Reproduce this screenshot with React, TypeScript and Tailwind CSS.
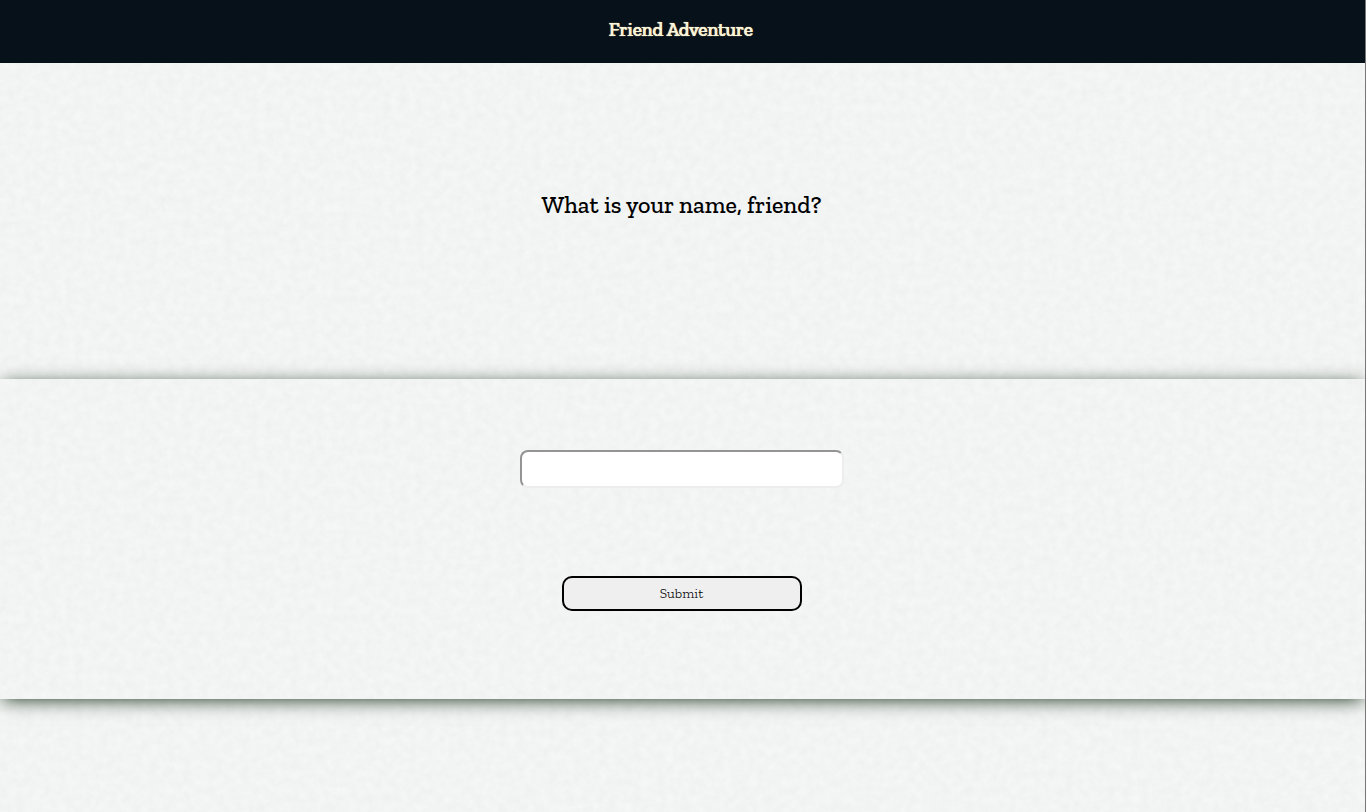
import { useState } from "react";

function PaperTexture({ id }: { id: string }) {
  return (
    <svg aria-hidden="true" className="pointer-events-none absolute inset-0 h-full w-full">
      <filter id={id} x="0" y="0" width="100%" height="100%" colorInterpolationFilters="sRGB">
        <feTurbulence type="fractalNoise" baseFrequency="0.12" numOctaves="3" seed="8" stitchTiles="stitch" />
        <feColorMatrix
          values="0.036 0 0 0 0.932
                  0.036 0 0 0 0.938
                  0.036 0 0 0 0.936
                  0 0 0 0 1"
        />
      </filter>
      <rect width="100%" height="100%" filter={`url(#${id})`} />
    </svg>
  );
}

export default function App() {
  const [name, setName] = useState("");

  return (
    <div className="flex min-h-screen flex-col overflow-hidden border-r border-[#777777] bg-[#f2f4f3] font-['Zilla_Slab','DejaVu_Serif',serif] text-black">
      <header className="flex h-[63px] items-center justify-center bg-[#061119] pr-1 pb-0.5">
        <h1 className="text-[19px] font-normal text-[#fbf6da] [text-shadow:1px_0_0_#fbf6da,0_0_1px_#fbf6da]">Friend Adventure</h1>
      </header>
      <main className="relative flex grow flex-col">
        <PaperTexture id="paper-page" />
        <section className="relative flex h-[316px] items-center justify-center pr-0.5 pb-8">
          <h2 className="text-2xl font-medium">
            <label htmlFor="friend-name">What is your name, friend?</label>
          </h2>
        </section>
        <section className="relative h-80 shadow-[0_3px_18px_-3px_#0f2810]">
          <PaperTexture id="paper-panel" />
          <form
            className="relative flex flex-col items-center pt-[71px] pr-0.5"
            onSubmit={(event) => event.preventDefault()}
          >
            <input
              id="friend-name"
              type="text"
              value={name}
              onChange={(event) => setName(event.target.value)}
              className="h-[38px] w-[324px] rounded-lg border-2 border-t-[#949494] border-r-[#ededed] border-b-[#ededed] border-l-[#949494] bg-white px-2 text-base"
            />
            <button
              type="submit"
              className="mt-[88px] h-[35px] w-60 rounded-[10px] border-2 border-black bg-[#efefef] text-sm font-light text-black"
            >
              Submit
            </button>
          </form>
        </section>
      </main>
    </div>
  );
}
